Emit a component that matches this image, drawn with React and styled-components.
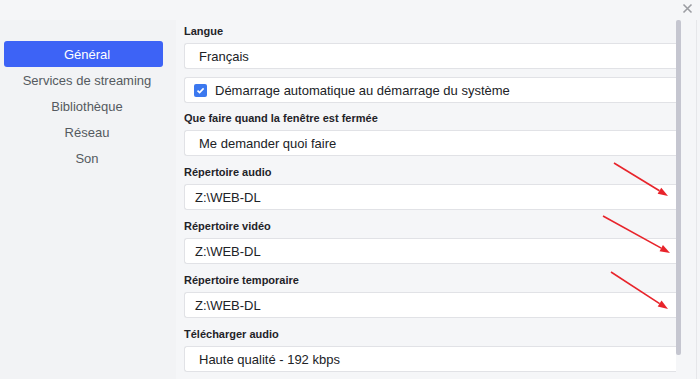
import React from "react";
import styled, { createGlobalStyle } from "styled-components";

const GlobalStyle = createGlobalStyle`
  html, body {
    margin: 0;
    padding: 0;
    background: #f5f6f8;
    font-family: "Liberation Sans", Arial, sans-serif;
  }
`;

//#region Styled Component Definitions
const Window = styled.div`
  position: relative;
  width: 700px;
  height: 379px;
  overflow: hidden;
  background: #f5f6f8;
  display: flex;
  flex-direction: column;
`;

const TitleBar = styled.div`
  height: 20px;
  flex: none;
  display: flex;
  justify-content: flex-end;
  align-items: flex-start;
  padding-right: 7px;
  padding-top: 3px;
  box-sizing: border-box;
`;

const CloseButton = styled.button`
  border: none;
  background: none;
  padding: 0;
  width: 11px;
  height: 11px;
  display: flex;
  cursor: pointer;
`;

const Body = styled.div`
  flex: 1;
  display: flex;
  min-height: 0;
`;

const Sidebar = styled.nav`
  width: 176px;
  flex: none;
  background: #f2f3f5;
  padding: 21px 13px 0 4px;
  box-sizing: border-box;
  display: flex;
  flex-direction: column;
`;

const NavItem = styled.div`
  height: 26px;
  line-height: 27px;
  text-align: center;
  font-size: 13px;
  border-radius: 3px;
  padding-left: 7px;
  color: ${(p) => (p.$active ? "#ffffff" : "#555a60")};
  background: ${(p) => (p.$active ? "#3d63f6" : "transparent")};
`;

const Main = styled.main`
  flex: 1;
  min-width: 0;
  padding: 4px 0 0 8px;
  display: flex;
  flex-direction: column;
  gap: 9px;
  overflow: hidden;
`;

const Field = styled.div`
  display: flex;
  flex-direction: column;
`;

const Label = styled.div`
  font-size: 11px;
  line-height: 14px;
  font-weight: bold;
  color: #1f2328;
  margin-bottom: 5px;
`;

const Control = styled.div`
  height: 26px;
  box-sizing: border-box;
  background: #ffffff;
  border: 1px solid #e1e2e6;
  border-right: none;
  border-radius: 3px 0 0 3px;
  display: flex;
  align-items: center;
  padding-left: ${(p) => (p.$select ? "14px" : "10px")};
  font-size: 13px;
  color: #202226;
  white-space: nowrap;
`;

const CheckRow = styled(Control)`
  padding-left: 9px;
  gap: 8px;
  margin-top: -1px;
  margin-bottom: -1px;
`;

const CheckBox = styled.span`
  width: 13px;
  height: 13px;
  border-radius: 2px;
  background: #3b78ef;
  display: flex;
  align-items: center;
  justify-content: center;
  flex: none;
`;

const ScrollTrack = styled.div`
  width: 5px;
  flex: none;
  display: flex;
  flex-direction: column;
`;

const ScrollThumb = styled.div`
  height: 335px;
  background: #c5c6d0;
  border-radius: 2px;
`;

const Gutter = styled.div`
  width: 16px;
  flex: none;
  border-right: 1px solid #e6e7ea;
  box-sizing: border-box;
  margin-right: 3px;
`;

const Annotations = styled.svg`
  position: absolute;
  left: 0;
  top: 0;
  pointer-events: none;
`;
//#endregion Styled Component Definitions

const navItems = ["Général", "Services de streaming", "Bibliothèque", "Réseau", "Son"];

const arrows = [
  [614, 163, 668, 196],
  [603, 216, 670, 253],
  [611, 272, 668, 309],
];

const Arrow = ({ x1, y1, x2, y2 }) => {
  const a = Math.atan2(y2 - y1, x2 - x1);
  const len = 10;
  const w = 3.5;
  const bx = x2 - len * Math.cos(a);
  const by = y2 - len * Math.sin(a);
  const px = -Math.sin(a) * w;
  const py = Math.cos(a) * w;
  return (
    <g>
      <line x1={x1} y1={y1} x2={bx} y2={by} stroke="#e8242b" strokeWidth="1.6" />
      <polygon
        points={`${x2},${y2} ${bx + px},${by + py} ${bx - px},${by - py}`}
        fill="#e8242b"
      />
    </g>
  );
};

const App = () => {
  return (
    <Window>
      <GlobalStyle />
      <TitleBar>
        <CloseButton aria-label="Fermer">
          <svg width="11" height="11" viewBox="0 0 11 11">
            <path d="M1.5 1.5 L9.5 9.5 M9.5 1.5 L1.5 9.5" stroke="#9b9da2" strokeWidth="1.6" />
          </svg>
        </CloseButton>
      </TitleBar>
      <Body>
        <Sidebar>
          {navItems.map((item, i) => (
            <NavItem key={item} $active={i === 0}>{item}</NavItem>
          ))}
        </Sidebar>
        <Main>
          <Field>
            <Label>Langue</Label>
            <Control $select>Français</Control>
          </Field>
          <CheckRow>
            <CheckBox>
              <svg width="9" height="9" viewBox="0 0 9 9">
                <path d="M1.5 4.6 L3.6 6.6 L7.6 2.4" stroke="#fff" strokeWidth="1.6" fill="none" />
              </svg>
            </CheckBox>
            Démarrage automatique au démarrage du système
          </CheckRow>
          <Field>
            <Label>Que faire quand la fenêtre est fermée</Label>
            <Control $select>Me demander quoi faire</Control>
          </Field>
          <Field>
            <Label>Répertoire audio</Label>
            <Control>Z:\WEB-DL</Control>
          </Field>
          <Field>
            <Label>Répertoire vidéo</Label>
            <Control>Z:\WEB-DL</Control>
          </Field>
          <Field>
            <Label>Répertoire temporaire</Label>
            <Control>Z:\WEB-DL</Control>
          </Field>
          <Field>
            <Label>Télécharger audio</Label>
            <Control $select>Haute qualité - 192 kbps</Control>
          </Field>
        </Main>
        <ScrollTrack>
          <ScrollThumb />
        </ScrollTrack>
        <Gutter />
      </Body>
      <Annotations width="700" height="379">
        {arrows.map(([x1, y1, x2, y2], i) => (
          <Arrow key={i} x1={x1} y1={y1} x2={x2} y2={y2} />
        ))}
      </Annotations>
    </Window>
  );
};

export default App;
